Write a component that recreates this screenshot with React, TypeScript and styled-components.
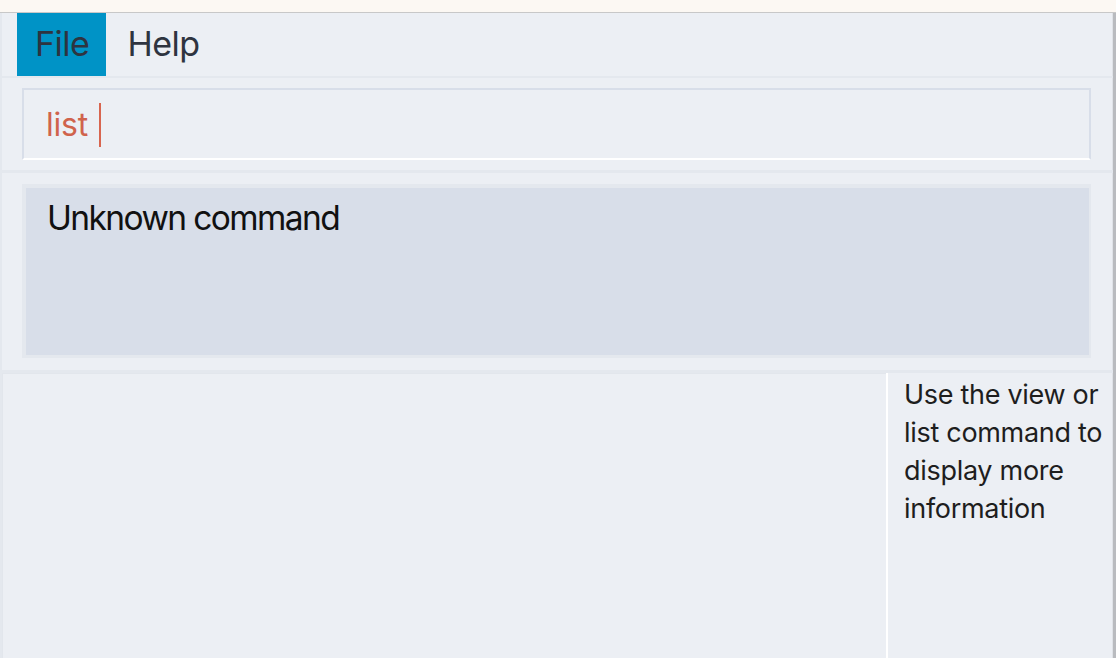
import React from "react";
import styled, { createGlobalStyle } from "styled-components";

const Global = createGlobalStyle`
  html, body { margin: 0; padding: 0; background: #eceff4; }
  body { font-family: Inter, "Noto Sans", sans-serif; overflow: hidden; }
  #root { height: 658px; }
`;

const Page = styled.div`
  height: 658px;
  display: flex;
  flex-direction: column;
`;

const TitleStrip = styled.div`
  height: 12px;
  flex: none;
  background: #fcf8f3;
  border-bottom: 1px solid #c8c8c8;
`;

const Window = styled.div`
  flex: 1;
  display: flex;
  flex-direction: column;
  min-height: 0;
  border-left: 2px solid #e4e8ee;
  border-right: 3px solid #b9bbbf;
  box-shadow: inset -1px 0 0 #dfe2e7;
`;

const MenuBar = styled.div`
  height: 63px;
  flex: none;
  display: flex;
  align-items: stretch;
  gap: 3px;
  padding-left: 15px;
  border-bottom: 2px solid #e4e8ee;
`;

const MenuItem = styled.div<{ $active?: boolean }>`
  display: flex;
  align-items: center;
  padding: 0 17px 2px 18px;
  font-size: 34px;
  color: #2e3440;
  background: ${(p) => (p.$active ? "#0093c6" : "transparent")};
  letter-spacing: -0.5px;
`;

const Section = styled.div<{ $pt: number; $pb: number }>`
  flex: none;
  padding: ${(p) => p.$pt}px 22px ${(p) => p.$pb}px 20px;
  border-bottom: 3px solid #e4e8ee;
`;

const CommandBox = styled.div`
  height: 68px;
  border: 2px solid #d8dee9;
  border-bottom-color: #ffffff;
  display: flex;
  align-items: center;
  padding-left: 22px;
`;

const CommandText = styled.span`
  font-size: 32px;
  color: #d0634c;
  letter-spacing: -0.2px;
`;

const Caret = styled.span`
  display: inline-block;
  width: 2px;
  height: 44px;
  margin-left: 11px;
  margin-top: 2px;
  background: #d8654f;
`;

const ResultOuter = styled.div`
  border: 4px solid #e4e8ee;
  border-right-width: 2px;
  border-bottom-width: 3px;
`;

const ResultBox = styled.div`
  height: 167px;
  box-sizing: border-box;
  background: #d8dee9;
  padding: 10px 21px;
  font-size: 33.5px;
  color: #111111;
  letter-spacing: -1.6px;
`;

const Bottom = styled.div`
  flex: 1;
  display: flex;
  min-height: 0;
`;

const ListPane = styled.div`
  width: 884px;
  flex: none;
  border-top: 1px solid #e2e6ec;
  border-left: 1px solid #e2e6ec;
  box-sizing: border-box;
`;

const Divider = styled.div`
  width: 2px;
  flex: none;
  background: #ffffff;
`;

const InfoPane = styled.div`
  flex: 1;
  padding: 3px 4px 0 16px;
  font-size: 27px;
  line-height: 38px;
  color: #1e1e1e;
  letter-spacing: -0.3px;
`;

export default function App() {
  return (
    <>
      <Global />
      <Page>
        <TitleStrip />
        <Window>
          <MenuBar>
            <MenuItem $active>File</MenuItem>
            <MenuItem>Help</MenuItem>
          </MenuBar>
          <Section $pt={10} $pb={10}>
            <CommandBox>
              <CommandText>list</CommandText>
              <Caret />
            </CommandBox>
          </Section>
          <Section $pt={11} $pb={12}>
            <ResultOuter>
              <ResultBox>Unknown command</ResultBox>
            </ResultOuter>
          </Section>
          <Bottom>
            <ListPane />
            <Divider />
            <InfoPane>Use the view or list command to display more information</InfoPane>
          </Bottom>
        </Window>
      </Page>
    </>
  );
}
